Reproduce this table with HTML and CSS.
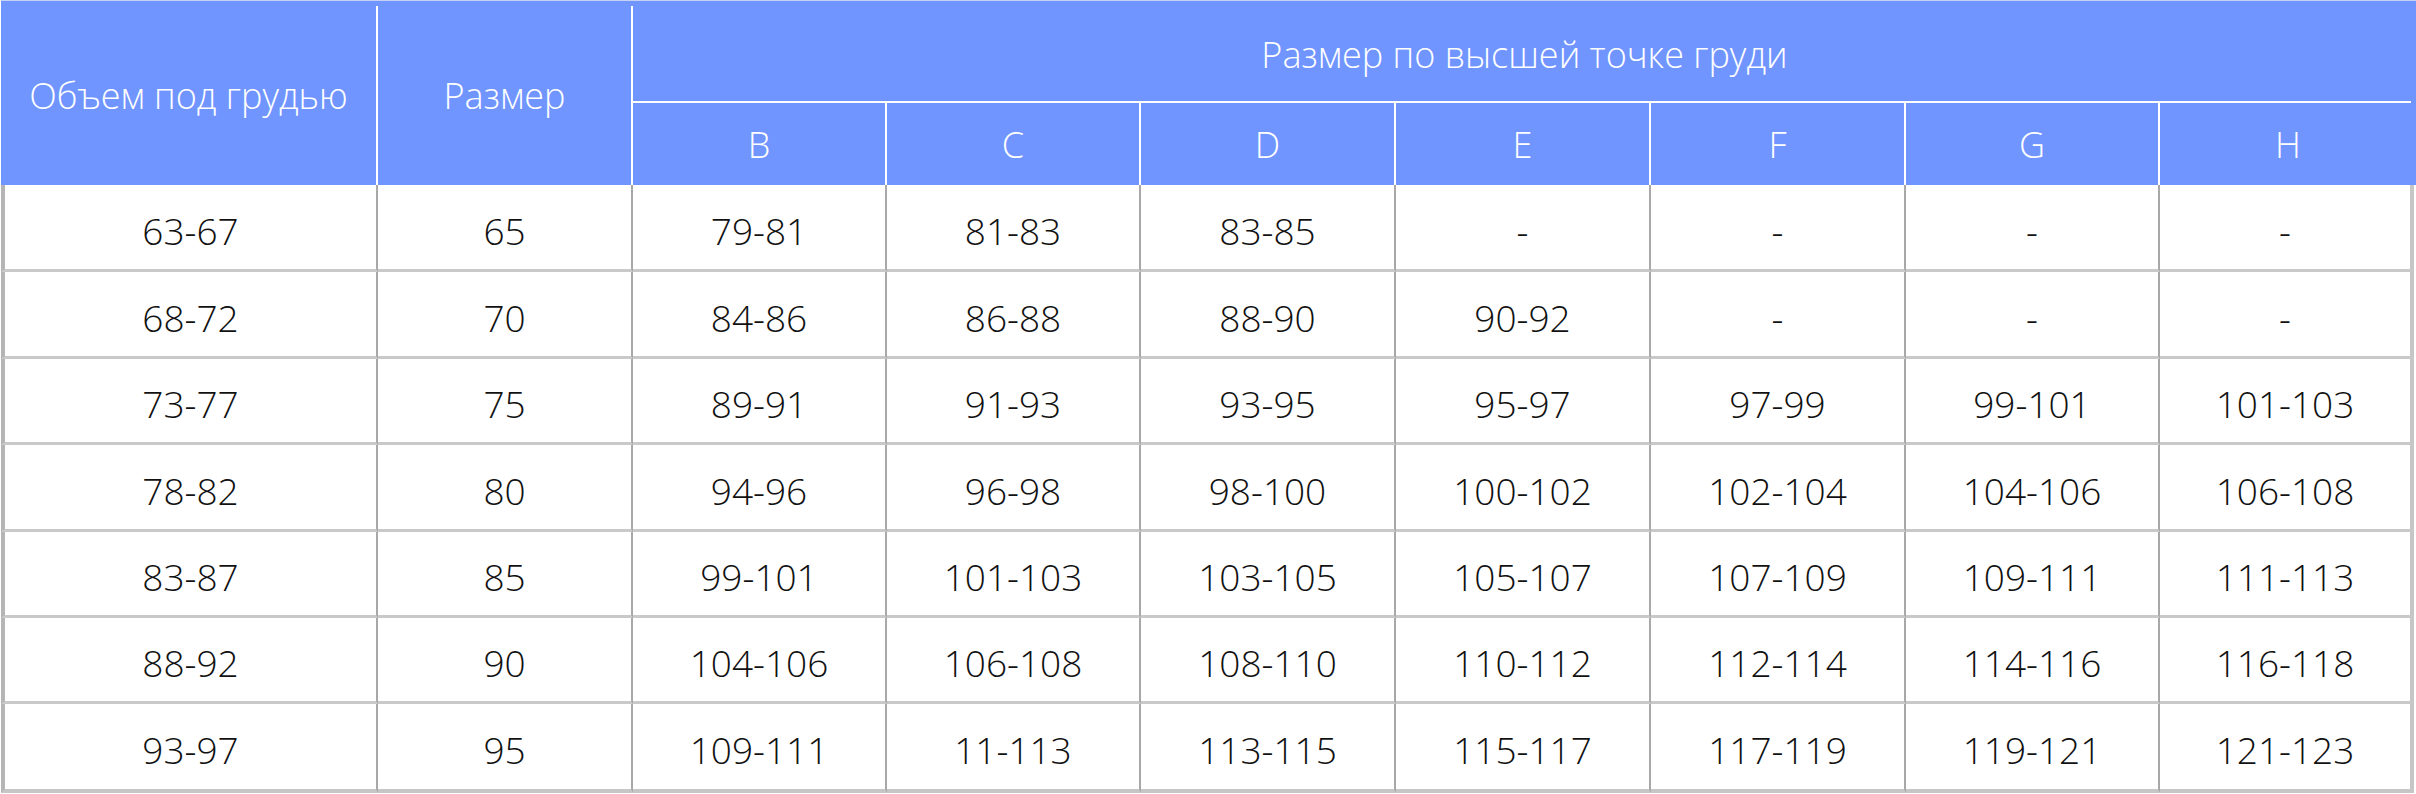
FILE: index.html
```html
<!DOCTYPE html>
<html lang="ru">
<head>
<meta charset="utf-8">
<title>Таблица размеров</title>
<link rel="stylesheet" href="styles.css">
</head>
<body>
<div class="sheet">
  <div class="cap"></div>
  <div class="grid">
    <div class="h h-main h-sep">Объем под грудью</div>
    <div class="h h-main2 h-sep">Размер</div>
    <div class="h h-group">Размер по высшей точке груди</div>
    <div class="h h-sub h-sep">B</div>
    <div class="h h-sub h-sep">C</div>
    <div class="h h-sub h-sep">D</div>
    <div class="h h-sub h-sep">E</div>
    <div class="h h-sub h-sep">F</div>
    <div class="h h-sub h-sep">G</div>
    <div class="h h-sub">H</div>

    <div class="c first">63-67</div><div class="c">65</div><div class="c">79-81</div><div class="c">81-83</div><div class="c">83-85</div><div class="c">-</div><div class="c">-</div><div class="c">-</div><div class="c last">-</div>
    <div class="c first">68-72</div><div class="c">70</div><div class="c">84-86</div><div class="c">86-88</div><div class="c">88-90</div><div class="c">90-92</div><div class="c">-</div><div class="c">-</div><div class="c last">-</div>
    <div class="c first">73-77</div><div class="c">75</div><div class="c">89-91</div><div class="c">91-93</div><div class="c">93-95</div><div class="c">95-97</div><div class="c">97-99</div><div class="c">99-101</div><div class="c last">101-103</div>
    <div class="c first">78-82</div><div class="c">80</div><div class="c">94-96</div><div class="c">96-98</div><div class="c">98-100</div><div class="c">100-102</div><div class="c">102-104</div><div class="c">104-106</div><div class="c last">106-108</div>
    <div class="c first">83-87</div><div class="c">85</div><div class="c">99-101</div><div class="c">101-103</div><div class="c">103-105</div><div class="c">105-107</div><div class="c">107-109</div><div class="c">109-111</div><div class="c last">111-113</div>
    <div class="c first">88-92</div><div class="c">90</div><div class="c">104-106</div><div class="c">106-108</div><div class="c">108-110</div><div class="c">110-112</div><div class="c">112-114</div><div class="c">114-116</div><div class="c last">116-118</div>
    <div class="c first end">93-97</div><div class="c end">95</div><div class="c end">109-111</div><div class="c end">11-113</div><div class="c end">113-115</div><div class="c end">115-117</div><div class="c end">117-119</div><div class="c end">119-121</div><div class="c last end">121-123</div>
  </div>
</div>
</body>
</html>
```

FILE: styles.css
```css
html, body {
  margin: 0;
  padding: 0;
  background: #ffffff;
}

body {
  font-family: "Open Sans", "Liberation Sans", sans-serif;
  font-weight: 300;
}

.sheet {
  width: 2415px;
  margin-left: 1px;
}

.cap {
  height: 5px;
  background: #7095ff;
  border-top: 1px solid #c7d2f3;
}

.grid {
  display: grid;
  grid-template-columns: 377px 255px 254px 254px 255px 255px 255px 254px 256px;
  grid-template-rows: 97px 82px 87px 87px 86px 87px 86px 86px 89px;
}

.h {
  box-sizing: border-box;
  background: #7095ff;
  color: #ffffff;
  display: flex;
  align-items: center;
  justify-content: center;
  font-size: 36px;
  white-space: nowrap;
}

.h-sep {
  border-right: 2px solid #ffffff;
}

.h-main {
  grid-row: 1 / span 2;
  grid-column: 1;
}

.h-main2 {
  grid-row: 1 / span 2;
  grid-column: 2;
}

.h-group {
  grid-row: 1;
  grid-column: 3 / span 7;
  background-image: linear-gradient(#ffffff, #ffffff);
  background-size: calc(100% - 5px) 2px;
  background-position: left bottom;
  background-repeat: no-repeat;
}

.h-sub {
  grid-row: 2;
}

.c {
  box-sizing: border-box;
  display: flex;
  align-items: center;
  justify-content: center;
  padding-top: 6px;
  font-size: 37px;
  color: #111111;
  border-right: 2px solid #a8a8a8;
  border-bottom: 3px solid #c9c9c9;
  white-space: nowrap;
}

.c.first {
  border-left: 4px solid #b5b5b5;
}

.c.last {
  border-right: 4px solid #c6c6c6;
  margin-right: 2px;
}

.c.end {
  border-bottom: 4px solid #c6c6c6;
}
```
